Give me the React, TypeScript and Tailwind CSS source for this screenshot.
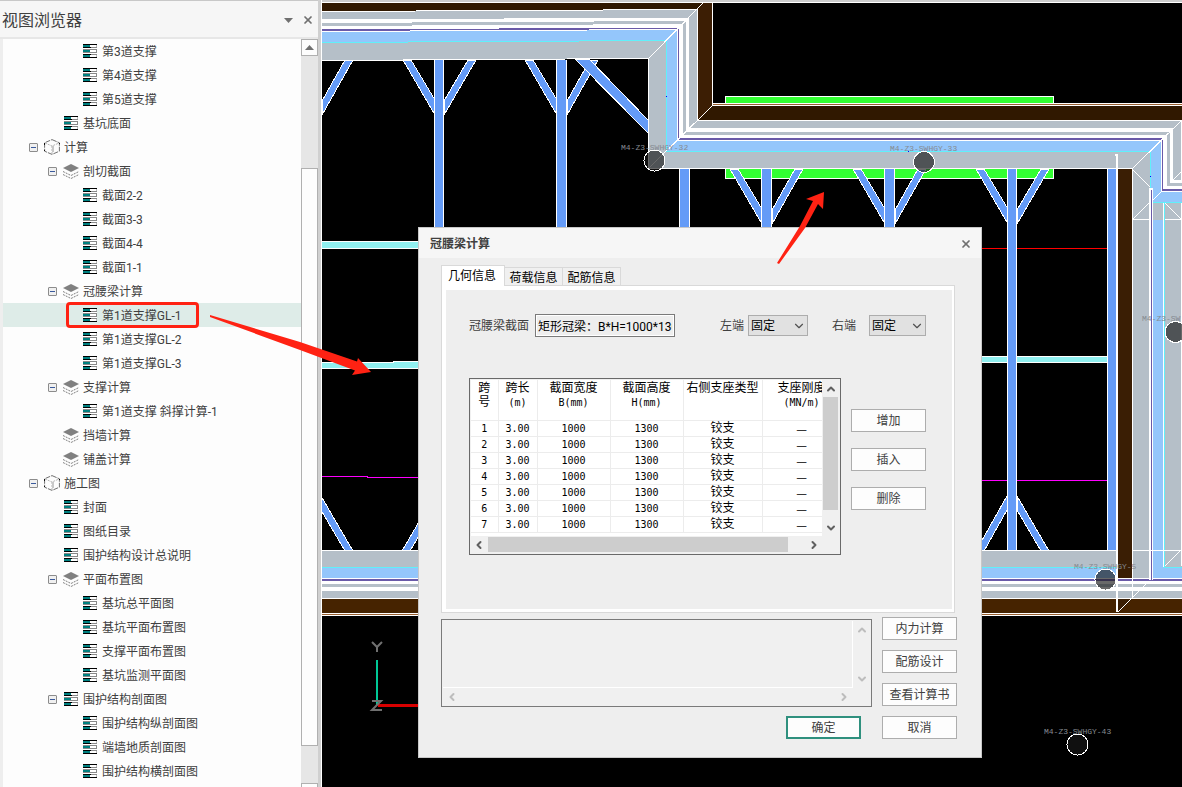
import type { ReactNode } from 'react'
import clsx from 'clsx'
import { ChevronDown, ChevronLeft, ChevronRight, ChevronUp, X } from 'lucide-react'

type IconKind = 'sheet' | 'layers' | 'cube'

interface TreeNode {
    label: string
    depth: 0 | 1 | 2
    icon: IconKind
    open?: boolean
    selected?: boolean
}

const TREE: TreeNode[] = [
    { label: '第3道支撑', depth: 2, icon: 'sheet' },
    { label: '第4道支撑', depth: 2, icon: 'sheet' },
    { label: '第5道支撑', depth: 2, icon: 'sheet' },
    { label: '基坑底面', depth: 1, icon: 'sheet' },
    { label: '计算', depth: 0, icon: 'cube', open: true },
    { label: '剖切截面', depth: 1, icon: 'layers', open: true },
    { label: '截面2-2', depth: 2, icon: 'sheet' },
    { label: '截面3-3', depth: 2, icon: 'sheet' },
    { label: '截面4-4', depth: 2, icon: 'sheet' },
    { label: '截面1-1', depth: 2, icon: 'sheet' },
    { label: '冠腰梁计算', depth: 1, icon: 'layers', open: true },
    { label: '第1道支撑GL-1', depth: 2, icon: 'sheet', selected: true },
    { label: '第1道支撑GL-2', depth: 2, icon: 'sheet' },
    { label: '第1道支撑GL-3', depth: 2, icon: 'sheet' },
    { label: '支撑计算', depth: 1, icon: 'layers', open: true },
    { label: '第1道支撑 斜撑计算-1', depth: 2, icon: 'sheet' },
    { label: '挡墙计算', depth: 1, icon: 'layers' },
    { label: '铺盖计算', depth: 1, icon: 'layers' },
    { label: '施工图', depth: 0, icon: 'cube', open: true },
    { label: '封面', depth: 1, icon: 'sheet' },
    { label: '图纸目录', depth: 1, icon: 'sheet' },
    { label: '围护结构设计总说明', depth: 1, icon: 'sheet' },
    { label: '平面布置图', depth: 1, icon: 'layers', open: true },
    { label: '基坑总平面图', depth: 2, icon: 'sheet' },
    { label: '基坑平面布置图', depth: 2, icon: 'sheet' },
    { label: '支撑平面布置图', depth: 2, icon: 'sheet' },
    { label: '基坑监测平面图', depth: 2, icon: 'sheet' },
    { label: '围护结构剖面图', depth: 1, icon: 'sheet', open: true },
    { label: '围护结构纵剖面图', depth: 2, icon: 'sheet' },
    { label: '端墙地质剖面图', depth: 2, icon: 'sheet' },
    { label: '围护结构横剖面图', depth: 2, icon: 'sheet' },
]

const INDENT = ['pl-[26px]', 'pl-[45px]', 'pl-[64px]']

const COLUMNS = [
    { name: '跨', unit: '号', width: 'w-[27px]' },
    { name: '跨长', unit: '(m)', width: 'w-[39px]' },
    { name: '截面宽度', unit: 'B(mm)', width: 'w-[73px]' },
    { name: '截面高度', unit: 'H(mm)', width: 'w-[73px]' },
    { name: '右侧支座类型', unit: '', width: 'w-[79px]' },
    { name: '支座刚度', unit: '(MN/m)', width: 'w-[79px]' },
]

const SPANS = [1, 2, 3, 4, 5, 6, 7]

function SheetIcon() {
    return (
        <svg width="14" height="14" viewBox="0 0 14 14" shapeRendering="crispEdges">
            <rect width="14" height="14" fill="#fff" />
            <path d="M0 0h14v1H0zM0 3h8v1H0zM0 10h8v1H0zM0 13h14v1H0z" fill="#000" />
            <path d="M0 5h14v1H0zM0 8h14v1H0zM13 5h1v4h-1zM8 3h6v1H8zM8 10h6v1H8z" fill="#888" />
            <path d="M13 1h1v2h-1zM13 11h1v2h-1z" fill="#bbb" />
            <path d="M0 1h7v2H0zM0 6h7v2H0zM0 11h7v2H0z" fill="#008080" />
        </svg>
    )
}

function LayersIcon() {
    return (
        <svg width="16" height="16" viewBox="0 0 16 16" fill="none">
            <path d="M8 1l8 4-8 4-8-4z" fill="#808080" />
            <path d="M0 8.5l8 4 8-4M0 11.5l8 4 8-4" stroke="#808080" strokeDasharray="2 1" />
        </svg>
    )
}

function CubeIcon() {
    return (
        <svg width="16" height="16" viewBox="0 0 16 16" fill="none" stroke="#707070">
            <path d="M8 .6l7.4 3.2v8.4L8 15.4.6 12.2V3.8z" strokeDasharray="5 1" />
            <path d="M1 4l7 3 7-3M8 7v8" stroke="#b5b5b5" strokeDasharray="2 1" />
            <path d="M.5 4v2M15.5 4v1M.5 11v1" stroke="#111" />
            <path d="M9 7v6" stroke="#c8c8c8" strokeWidth="2" />
        </svg>
    )
}

function NodeIcon(props: { kind: IconKind }) {
    if (props.kind === 'sheet') return <SheetIcon />
    if (props.kind === 'layers') return <LayersIcon />
    return <CubeIcon />
}

function TreeRow({ node }: { node: TreeNode }) {
    return (
        <li className={clsx('relative flex h-6 items-center whitespace-nowrap', INDENT[node.depth], node.selected && 'bg-[#deece8]')}>
            {node.open ? (
                <button aria-label="收起" className="flex size-[9px] items-center justify-center rounded-[1px] border border-[#8c8c8c] bg-[#f0f0f0]">
                    <span className="h-px w-[5px] bg-[#3a5a9c]" />
                </button>
            ) : (
                <span className="w-[9px]" />
            )}
            <span className="ml-1.5 flex w-4 justify-center">
                <NodeIcon kind={node.icon} />
            </span>
            <span className="ml-1 pt-0.5">{node.label}</span>
            {node.selected && <span className="absolute -top-px left-[63px] h-[26px] w-[133px] rounded-[4px] border-3 border-[#ff2213]" />}
        </li>
    )
}

function Sidebar() {
    return (
        <aside className="flex w-[318px] shrink-0 flex-col border-t border-[#c8c8c8] bg-[#f6f6f6] text-xs text-[#404040]">
            <header className="flex h-[38px] shrink-0 items-center border-b-2 border-[#e7e7e7] pt-0.5 pr-1 pl-0.5">
                <h1 className="flex-1 pt-0.5 text-base">视图浏览器</h1>
                <button aria-label="菜单" className="mr-[9px]">
                    <svg width="9" height="5" viewBox="0 0 9 5">
                        <path d="M0 0h9L4.500 5z" fill="#707070" />
                    </svg>
                </button>
                <button aria-label="关闭">
                    <X className="size-3 text-[#707070]" strokeWidth={3.500} />
                </button>
            </header>
            <div className="flex min-h-0 flex-1 bg-[#eee] pl-[3px]">
                <ul className="flex-1 overflow-hidden bg-[#fdfdfd]">
                    {TREE.map((node) => (
                        <TreeRow key={node.label} node={node} />
                    ))}
                </ul>
                <div className="flex w-[17px] flex-col bg-[#e6e6e6]">
                    <button aria-label="向上" className="flex h-[17px] items-center justify-center border border-[#b0b0b0] bg-[#fdfdfd]">
                        <svg width="9" height="5" viewBox="0 0 9 5">
                            <path d="M0 5h9L4.500 0z" fill="#707070" />
                        </svg>
                    </button>
                    <div className="mt-28 mb-[37px] flex-1 border border-[#b0b0b0] bg-[#fdfdfd]" />
                    <div className="h-1 border border-b-0 border-[#b0b0b0] bg-[#fdfdfd]" />
                </div>
            </div>
        </aside>
    )
}

// Wall layers from the outside in: [fill, left y, top y, x1, y2, x3, y4].
// Every outline encloses the pit, so each one is painted over the previous.
const WALL: [string, number, number, number, number, number, number][] = [
    ['#fff', 2, 2, 713, 103, 1190, 800],
    ['#301800', 3, 3, 712, 106, 1190, 800],
    ['#fff', 11, 9, 698, 120, 1190, 800],
    ['#b5bfc8', 12, 10, 697, 121, 1181, 800],
    ['#fff', 19, 18, 689, 128, 1173, 180],
    ['#b5bfc8', 23, 21, 686, 132, 1170, 183],
    ['#fff', 26, 24, 683, 135, 1167, 186],
    ['#6a5aa8', 29, 28, 679, 138, 1163, 189],
    ['#fff', 31, 29, 678, 140, 1162, 191],
    ['#94c6fb', 32, 30, 677, 141, 1161, 192],
    ['#60f0fa', 42, 40, 667, 151, 1151, 202],
    ['#b5bfc8', 43, 41, 666, 152, 1150, 203],
    ['#fff', 60, 58, 649, 168, 1133, 800],
    ['#000', 61, 59, 648, 169, 1132, 800],
]

// Lower wall bands: [fill, y, height]
const BASE: [string, number, number][] = [
    ['#b5bfc8', 551, 16],
    ['#60f0fa', 567, 1],
    ['#94c6fb', 568, 10],
    ['#fff', 578, 1],
    ['#6a5aa8', 579, 2],
    ['#fff', 581, 3],
    ['#b5bfc8', 584, 3],
    ['#fff', 587, 4],
    ['#b5bfc8', 591, 7],
    ['#fff', 598, 1],
    ['#462300', 599, 14],
    ['#fff', 613, 1],
    ['#9a6030', 614, 1],
    ['#fff', 615, 1],
    ['#000', 616, 184],
]

const MARKERS = [
    { x: 654.5, y: 160.5, label: 'M4-Z3-SWHGY-32', tx: 621, ty: 150 },
    { x: 924, y: 162, label: 'M4-Z3-SWHGY-33', tx: 890, ty: 151 },
    { x: 1175.5, y: 332, label: 'M4-Z3-SW', tx: 1142, ty: 321 },
    { x: 1105.5, y: 579.5, label: 'M4-Z3-SWHGY-5', tx: 1074, ty: 569 },
    { x: 1077.5, y: 744.5, label: 'M4-Z3-SWHGY-43', tx: 1044, ty: 734 },
]

function Strut(props: { x: number; top: number; width?: number; arms?: boolean }) {
    const { x, top, width = 11, arms = true } = props
    return (
        <g fill="#649bf7" stroke="#fff">
            {arms && <path d={`M${x - 31} ${top}h8L${x + 1} ${top + 40}v15zM${x + 42} ${top}h-8L${x + width} ${top + 41}v14z`} />}
            <path d={`M${x + 0.5} ${top}V550M${x + width - 0.5} ${top}V550`} />
            <rect x={x + 1} y={top} width={width - 2} height={550 - top} stroke="none" />
        </g>
    )
}

function Drawing() {
    return (
        <svg className="size-full font-['Liberation_Mono',monospace] text-[8px]" viewBox="322 0 860 787" preserveAspectRatio="xMinYMin slice" shapeRendering="crispEdges">
            <rect x="322" width="860" height="787" fill="#000" />
            <rect x="725.5" y="96.5" width="328" height="20" fill="#32ff32" stroke="#fff" />
            <rect x="322" width="860" height="2" fill="#ccc" />
            {WALL.map(([fill, yl, yt, x1, y2, x3, y4], i) => (
                <path key={i} d={`M322 ${yl}L${x1} ${yt}V${y2}H${x3}V${y4}H1190V800H322z`} fill={fill} />
            ))}
            <path d="M713 2h469v1H713z" fill="#fff" />
            <path d="M713 104h469v1H713z" fill="#9a6030" />
            <path d="M703 3h9v103l-14 14V9z" fill="#3c1e04" />
            <path d="M725.500 169v9.500h328V169" fill="#32ff32" stroke="#fff" />

            {/* beams crossing the pit */}
            <g fill="#90f0f0" stroke="#fff">
                <path d="M320 241.500h100v7H320z" />
                <path d="M320 362.500h73v-1h30v7H320z" />
                <path d="M980 356.500h128v6H980z" />
            </g>
            <path d="M980 248.500h128" stroke="#f00" />
            <path d="M322 476.500h45v1h60M980 480.500h128" fill="none" stroke="#f0f" />

            {/* struts */}
            <Strut x={311} top={60} />
            <Strut x={434} top={60} width={10} />
            <Strut x={556} top={60} />
            <Strut x={679} top={169} arms={false} />
            <Strut x={761} top={169} />
            <Strut x={884} top={169} />
            <Strut x={1007} top={169} width={10} />
            <Strut x={1107} top={169} width={10} arms={false} />
            <path d="M575 59h14l59 61v13z" fill="#649bf7" stroke="#fff" />
            <g fill="#649bf7" stroke="#fff">
                <path d="M321 496l32 55h-8l-24-41zM434 496l-32 55h8l24-41z" />
                <path d="M1007 496l-31 55h8l23-41zM1017 496l32 55h-8l-24-41z" />
            </g>

            {/* lower wall */}
            {BASE.map(([fill, y, height]) => (
                <rect key={y} x="322" y={y} width="860" height={height} fill={fill} />
            ))}

            {/* right wall */}
            <rect x="1118" y="169" width="14" height="409" fill="#3a1e04" />
            <rect x="1133" y="220" width="16" height="358" fill="#b5bfc8" />
            <rect x="1153" y="220" width="10" height="358" fill="#94c6fb" />
            <rect x="1165" y="220" width="16" height="346" fill="#b5bfc8" />
            <rect x="1149" y="188" width="4" height="392" fill="#fff" />
            <rect x="1151" y="190" width="1" height="390" fill="#6a5aa8" />
            <rect x="1163" y="203" width="1" height="364" fill="#fff" />
            <rect x="1164" y="203" width="1" height="364" fill="#60f0fa" />
            <path d="M1118 599h14l-14 14z" fill="#3a1e04" />
            <g stroke="#fff" fill="none">
                <path d="M322 550.500h795M1133 550.500h49M1132.500 169v412M1181.500 203v363" />
                <path d="M1133 219.500h16M1165 219.500h17" />
                <path d="M1117 154v458M1115 154.500h2" strokeWidth="2" />
                <path d="M1132.500 581v18" />
                <path d="M703 3L649 58M712 106L648 169M1182 120L1132 169M1182 171L1173 180M1161 192L1153 200" />
                <path d="M1132 169L1150 187M1133 219L1149 203M1165 203L1181 219M1118 612L1149 581M1165 566L1181 550" />
            </g>
            <path d="M666 96h1v1h-1zM908 151h1v1h-1zM1150 176h1v1h-1z" fill="#00f" />

            {/* monitoring points */}
            {MARKERS.map((m) => (
                <g key={m.label}>
                    <text x={m.tx} y={m.ty} fill="#858a90">
                        {m.label}
                    </text>
                    <circle cx={m.x} cy={m.y} r="10.5" fill="#191919" fillOpacity="0.65" stroke="#fff" />
                </g>
            ))}

            {/* UCS axes */}
            <path d="M376 660h2v45h-2z" fill="#00c896" />
            <path d="M378 704h44v3h-44z" fill="#d80000" />
            <g fill="none" stroke="#707070" strokeWidth="2" shapeRendering="auto">
                <path d="M372 642l5 5 5-5M377 647v5M372 701h9l-9 9h10" />
            </g>
        </svg>
    )
}

function PushButton(props: { children: ReactNode; primary?: boolean }) {
    return (
        <button
            className={clsx('h-[23px] w-[75px] bg-[#fdfdfd] text-center leading-4 text-[#404040]', {
                'border-2 border-[#2f907e]': props.primary,
                'border border-[#adadad]': !props.primary,
            })}
        >
            {props.children}
        </button>
    )
}

function EndSelect(props: { id: string; className: string }) {
    return (
        <div className={clsx('relative', props.className)}>
            <select id={props.id} className="h-[21px] w-full appearance-none border border-[#adadad] bg-[#e1e1e1] pt-px pl-0.5 text-black">
                <option>固定</option>
                <option>铰接</option>
            </select>
            <ChevronDown className="pointer-events-none absolute top-1 right-0.5 size-3.5 text-[#505050]" strokeWidth={2} />
        </div>
    )
}

function SpanTable() {
    return (
        <div className="h-[177px] w-[372px] border border-[#696969] bg-[#f0f0f0] p-px">
            <div className="flex">
                <div className="h-[156px] min-w-0 flex-1 overflow-hidden bg-white">
                    <table className="w-[370px] table-fixed border-collapse text-black">
                        <thead>
                            <tr className="h-10 align-top">
                                {COLUMNS.map((col) => (
                                    <th key={col.name} className={clsx('border-r border-b border-[#ececec] p-0 pt-px font-normal leading-[14px] whitespace-nowrap', col.width)}>
                                        {col.name}
                                        <br />
                                        <span className={clsx(col.unit !== '号' && "font-['DejaVu_Sans_Mono',monospace] text-[10px]")}>{col.unit}</span>
                                    </th>
                                ))}
                            </tr>
                        </thead>
                        <tbody className="text-center leading-[15px]">
                            {SPANS.map((n) => (
                                <tr key={n} className="h-4 font-['DejaVu_Sans_Mono','Noto_Sans_CJK_SC',monospace] text-[10px] *:border-r *:border-b *:border-[#ececec] *:p-0">
                                    <td>{n}</td>
                                    <td>3.00</td>
                                    <td>1000</td>
                                    <td>1300</td>
                                    <td className="text-xs leading-[15px]">铰支</td>
                                    <td className="font-['Noto_Sans_CJK_SC',sans-serif] text-xs leading-[15px]">—</td>
                                </tr>
                            ))}
                        </tbody>
                    </table>
                </div>
                <div className="flex w-[17px] flex-col items-center bg-[#f0f0f0] text-[#606060]">
                    <ChevronUp className="mt-[3px] mb-0.5 size-3" strokeWidth={4} />
                    <div className="h-[113px] w-[15px] bg-[#cdcdcd]" />
                    <ChevronDown className="mt-3 size-3" strokeWidth={4} />
                </div>
            </div>
            <div className="mt-px flex h-[15px] items-center pl-0.5 text-[#606060]">
                <ChevronLeft className="size-3" strokeWidth={4} />
                <div className="mr-5 ml-[3px] h-[15px] w-[300px] bg-[#cdcdcd]" />
                <ChevronRight className="size-3" strokeWidth={4} />
            </div>
        </div>
    )
}

function MessageBox() {
    return (
        <div className="grid h-[88px] grid-cols-[1fr_17px] grid-rows-[1fr_17px] border border-[#7a7a7a] bg-[#f0f0f0] p-px text-[#bdbdbd]">
            <textarea aria-label="计算信息" readOnly className="size-full resize-none border-r border-b border-white outline-none" />
            <div className="flex flex-col items-center justify-between py-[3px]">
                <ChevronUp className="size-3" strokeWidth={4} />
                <ChevronDown className="size-3" strokeWidth={4} />
            </div>
            <div className="flex items-center justify-between px-[3px]">
                <ChevronLeft className="size-3" strokeWidth={4} />
                <ChevronRight className="size-3" strokeWidth={4} />
            </div>
        </div>
    )
}

function BeamDialog() {
    return (
        <section role="dialog" aria-label="冠腰梁计算" className="absolute top-[227px] left-24 w-[564px] border border-[#c8c8c8] bg-[#eee] text-xs text-[#404040]">
            <header className="flex h-[30px] items-center justify-between bg-[#f6f6f6] pt-px pr-[9px] pl-[11px]">
                <h2 className="font-bold text-[#404040]">冠腰梁计算</h2>
                <button aria-label="关闭">
                    <X className="size-3 text-[#707070]" strokeWidth={3.500} />
                </button>
            </header>
            <div className="px-[22px] pt-[7px] pb-[18px]">
                <div role="tablist" className="flex items-end text-black">
                    <button role="tab" aria-selected="true" className="relative -mb-px h-[21px] w-16 border border-b-0 border-[#d9d9d9] bg-white pr-0.5">
                        几何信息
                    </button>
                    <button role="tab" className="h-[18px] w-[58px] border border-b-0 border-l-0 border-[#d9d9d9] bg-[#f0f0f0] pt-0.5">
                        荷载信息
                    </button>
                    <button role="tab" className="h-[18px] w-[58px] border border-b-0 border-l-0 border-[#d9d9d9] bg-[#f0f0f0] pt-0.5">
                        配筋信息
                    </button>
                </div>
                <div className="w-[514px] border border-[#d9d9d9] bg-white pt-1 pr-0.5 pb-[3px] pl-1">
                    <div className="bg-[#eee] pt-6 pb-[54px] pl-[23px]">
                        <div className="flex items-center">
                            <label htmlFor="section" className="w-[66px]">
                                冠腰梁截面
                            </label>
                            <input
                                id="section"
                                readOnly
                                defaultValue="矩形冠梁：B*H=1000*1300"
                                className="h-[23px] w-[140px] border border-[#7a7a7a] bg-[#eee] px-0.5 text-black inset-ring inset-ring-white outline-none"
                            />
                            <label htmlFor="left-end" className="ml-[45px] w-7">
                                左端
                            </label>
                            <EndSelect id="left-end" className="w-[60px]" />
                            <label htmlFor="right-end" className="ml-6 w-[37px]">
                                右端
                            </label>
                            <EndSelect id="right-end" className="w-[57px]" />
                        </div>
                        <div className="mt-[41px] flex gap-2.5">
                            <SpanTable />
                            <div className="mt-[31px] flex flex-col gap-4">
                                <PushButton>增加</PushButton>
                                <PushButton>插入</PushButton>
                                <PushButton>删除</PushButton>
                            </div>
                        </div>
                    </div>
                </div>
                <div className="mt-1 flex items-end gap-2.5">
                    <div className="flex w-[431px] flex-col gap-[9px]">
                        <MessageBox />
                        <div className="flex justify-end pr-[11px]">
                            <PushButton primary>确定</PushButton>
                        </div>
                    </div>
                    <div className="flex flex-col gap-2.5">
                        <PushButton>内力计算</PushButton>
                        <PushButton>配筋设计</PushButton>
                        <PushButton>查看计算书</PushButton>
                        <PushButton>取消</PushButton>
                    </div>
                </div>
            </div>
        </section>
    )
}

export default function App() {
    return (
        <div className="relative flex h-screen overflow-hidden font-['Roboto','Noto_Sans_CJK_SC',sans-serif]">
            <Sidebar />
            <div className="w-1 shrink-0 border-r border-white bg-[#d0d0d0]" />
            <main className="relative min-w-0 flex-1 bg-black">
                <Drawing />
                <BeamDialog />
            </main>

            {/* callout arrows */}
            <svg className="pointer-events-none absolute top-0 left-0" width="1182" height="787" viewBox="0 0 1182 787" fill="#ff2213">
                <path d="M210 315L300 342 357 361.500 358 358 371 372 352 375 355 370.500 300 350 210 317z" />
                <path d="M777 263L800 226 813 201 806 199 824 192 823 209 818 204 805 228 779 264z" />
            </svg>
        </div>
    )
}
